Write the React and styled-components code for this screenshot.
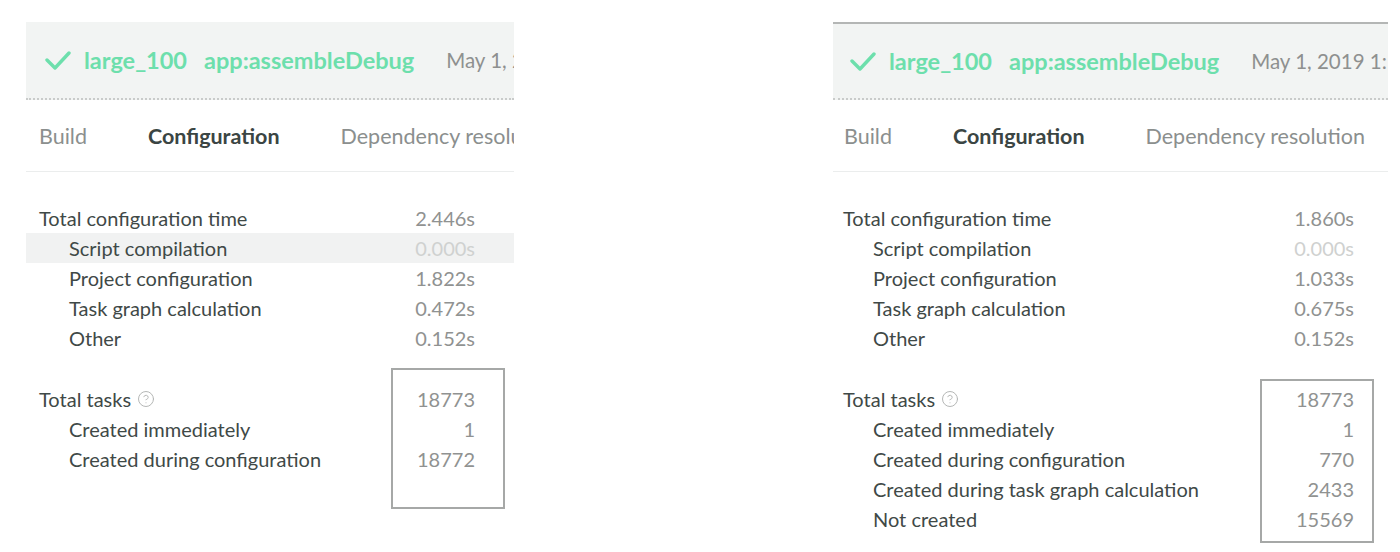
import React from 'react'
import styled, { createGlobalStyle } from 'styled-components'
import { CircleHelp } from 'lucide-react'

const GlobalStyle = createGlobalStyle`
   html, body {
      margin: 0;
      padding: 0;
      background: #ffffff;
      font-family: Lato, "Open Sans", sans-serif;
   }
`

const Page = styled.div`
   display: flex;
   align-items: flex-start;
   padding: 22px 0 0 26px;
   gap: 319px;
   height: 530px;
`

const Panel = styled.section`
   width: ${p => p.$width}px;
   white-space: nowrap;
`

const Header = styled.header`
   display: flex;
   align-items: center;
   height: 78px;
   padding-left: ${p => p.$inset}px;
   background: #f2f4f3;
   border-top: ${p => p.$topLine ? '2px solid #b4b6b5' : '0'};
   border-bottom: 2px dotted #c9cbca;
   box-sizing: border-box;
   overflow: hidden;
`

const Check = styled.svg`
   width: 26px;
   height: 20px;
   flex: none;
   margin-right: 13px;
`

const Green = styled.span`
   font-size: 23.5px;
   font-weight: 700;
   color: #6ddfac;
   margin-right: ${p => p.$gap}px;
`

const DateText = styled.span`
   font-size: 20.5px;
   color: #8e908f;
`

const Tabs = styled.nav`
   display: flex;
   align-items: center;
   gap: 61px;
   height: 72px;
   padding-left: ${p => p.$inset}px;
   border-bottom: 1px solid #ebeded;
   box-sizing: border-box;
   overflow: hidden;
`

const Tab = styled.span`
   font-size: 21.5px;
   font-weight: ${p => p.$active ? 700 : 400};
   color: ${p => p.$active ? '#3b4543' : '#8b8f8e'};
`

const Section = styled.div`
   position: relative;
   margin-top: ${p => p.$top}px;
`

const Row = styled.div`
   display: flex;
   align-items: center;
   justify-content: space-between;
   height: 30px;
   padding: 0 ${p => p.$right}px 0 ${p => p.$left}px;
   background: ${p => p.$hl ? '#f1f2f2' : 'transparent'};
`

const Label = styled.span`
   display: flex;
   align-items: center;
   gap: 6px;
   font-size: 20px;
   color: #3f4947;
   padding-left: ${p => p.$sub ? 30 : 0}px;
`

const Value = styled.span`
   font-size: 20px;
   color: ${p => p.$faint ? '#cfd1d0' : '#909291'};
`

const Mark = styled.div`
   position: absolute;
   top: ${p => p.$top}px;
   right: ${p => p.$right}px;
   width: ${p => p.$w}px;
   height: ${p => p.$h}px;
   border: 2px solid #a6a8a7;
   box-sizing: border-box;
   pointer-events: none;
`

const CheckIcon = () => (
   <Check viewBox="0 0 26 20">
      <path d="M2 10 L10 18 L24 3" fill="none" stroke="#6ddfac" strokeWidth="3.4" strokeLinecap="round" strokeLinejoin="round" />
   </Check>
)

const panels = [
   {
      width: 488,
      headInset: 19,
      tabInset: 13,
      left: 13,
      right: 39,
      topLine: false,
      config: ['2.446s', '0.000s', '1.822s', '0.472s', '0.152s'],
      tasks: [
         ['Created immediately', '1'],
         ['Created during configuration', '18772'],
      ],
      mark: { top: -16, right: 9, w: 114, h: 141 },
      highlight: 1,
   },
   {
      width: 555,
      headInset: 17,
      tabInset: 11,
      left: 10,
      right: 34,
      topLine: true,
      config: ['1.860s', '0.000s', '1.033s', '0.675s', '0.152s'],
      tasks: [
         ['Created immediately', '1'],
         ['Created during configuration', '770'],
         ['Created during task graph calculation', '2433'],
         ['Not created', '15569'],
      ],
      mark: { top: -5, right: 14, w: 114, h: 164 },
      highlight: -1,
   },
]

const configLabels = ['Total configuration time', 'Script compilation', 'Project configuration', 'Task graph calculation', 'Other']

const BuildPanel = ({ p }) => (
   <Panel $width={p.width}>
      <Header $inset={p.headInset} $topLine={p.topLine}>
         <CheckIcon />
         <Green $gap={17}>large_100</Green>
         <Green $gap={32}>app:assembleDebug</Green>
         <DateText>May 1, 2019 1:</DateText>
      </Header>
      <Tabs $inset={p.tabInset}>
         <Tab>Build</Tab>
         <Tab $active>Configuration</Tab>
         <Tab>Dependency resolution</Tab>
      </Tabs>
      <Section $top={31}>
         {configLabels.map((l, i) => (
            <Row key={l} $left={p.left} $right={p.right} $hl={i === p.highlight}>
               <Label $sub={i > 0}>{l}</Label>
               <Value $faint={p.config[i] === '0.000s'}>{p.config[i]}</Value>
            </Row>
         ))}
      </Section>
      <Section $top={31}>
         <Row $left={p.left} $right={p.right}>
            <Label>Total tasks <CircleHelp size={18} strokeWidth={1.3} color="#b3b5b4" /></Label>
            <Value>18773</Value>
         </Row>
         {p.tasks.map(([l, v]) => (
            <Row key={l} $left={p.left} $right={p.right}>
               <Label $sub>{l}</Label>
               <Value>{v}</Value>
            </Row>
         ))}
         <Mark $top={p.mark.top} $right={p.mark.right} $w={p.mark.w} $h={p.mark.h} />
      </Section>
   </Panel>
)

const App = () => (
   <>
      <GlobalStyle />
      <Page>
         {panels.map((p, i) => <BuildPanel key={i} p={p} />)}
      </Page>
   </>
)

export default App
